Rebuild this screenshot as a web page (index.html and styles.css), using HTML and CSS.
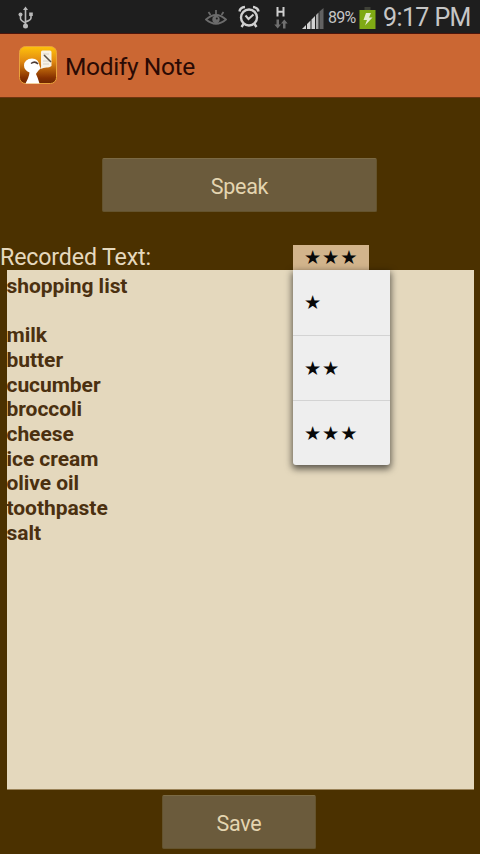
FILE: index.html
```html
<!DOCTYPE html>
<html lang="en">
<head>
<meta charset="utf-8">
<title>Modify Note</title>
<link rel="stylesheet" href="styles.css">
</head>
<body>
<div class="screen">
  <div class="status">
    <svg class="usb" width="16" height="24" viewBox="0 0 16 24" fill="none" stroke="#b9b9b9" stroke-width="1.6">
      <path d="M7.500 3v17M2.500 9v3.500q0 2 5 4.500M13 8v4q0 2-5.500 4"/>
      <path d="M7.500 0.500l2.500 3.500H5z" fill="#b9b9b9" stroke="none"/>
      <circle cx="7.500" cy="20" r="2.500" fill="#b9b9b9" stroke="none"/>
      <circle cx="2.500" cy="8.500" r="2" fill="#b9b9b9" stroke="none"/>
      <path d="M11.200 6.500h3.600v3.600h-3.600z" fill="#b9b9b9" stroke="none"/>
    </svg>
    <span class="fill"></span>
    <svg class="eye" width="22" height="18" viewBox="0 0 22 18" fill="none" stroke="#6c6c6c" stroke-width="1.700">
      <path d="M1 10.500Q11 1.500 21 10.500Q11 19 1 10.500zM11 5V1M5.500 6L3.500 3M16.500 6l2-3"/>
      <circle cx="11" cy="10.500" r="3.700" fill="#6c6c6c" stroke="none"/>
      <circle cx="11.800" cy="9.500" r="1" fill="#1e1e1e" stroke="none"/>
    </svg>
    <svg class="alarm" width="22" height="24" viewBox="0 0 22 24" fill="none" stroke="#d0d0d0" stroke-width="2.400">
      <circle cx="11" cy="12.500" r="8"/>
      <path d="M7.500 10.500l3 3.500 5-4.500" stroke-width="2"/>
      <path d="M1.500 6.500Q2 2.500 7 2M20.500 6.500Q20 2.500 15 2M5.500 19l-2 3M16.500 19l2 3"/>
    </svg>
    <svg class="data" width="14" height="23" viewBox="0 0 14 23">
      <path d="M3.500 0v9.500M9.500 0v9.500M3.500 4.700h6" fill="none" stroke="#d0d0d0" stroke-width="2"/>
      <path d="M2.500 12.500h2.500v5h2L3.700 21.500.3 17.500h2.200zM9 21.500h2.500v-5h2.200L10.300 12.500 7 16.500h2z" fill="#6f6f6f"/>
    </svg>
    <svg class="signal" width="22" height="22" viewBox="0 0 22 22">
      <path d="M0 21l4-4v4zM5 16l3.500-3.500V21H5zM9.500 11.500L13 8v13H9.500z" fill="#d2d2d2"/>
      <path d="M14 7l2.500-2.500V21H14z" fill="#a8a8a8"/>
      <path d="M17.500 3.500L21.500 0v21h-4z" fill="#626262"/>
    </svg>
    <span class="percent">89%</span>
    <svg class="battery" width="17" height="23" viewBox="0 0 17 23">
      <path d="M5.500 0h6v3h-6z" fill="#3f4138"/>
      <path d="M0.500 3h16v19h-16z" fill="#7faa14"/>
      <path d="M7 6h5l-2 4.500h3.500L6 18.500l2-5.500H4.500z" fill="#e6edcf"/>
    </svg>
    <span class="clock">9:17 PM</span>
  </div>
  <header class="bar">
    <svg width="38" height="38" viewBox="0 0 38 38">
      <defs>
        <linearGradient id="g" x1="0" y1="0" x2="0" y2="1">
          <stop offset="0" stop-color="#ffc20a"/><stop offset=".4" stop-color="#e28a12"/><stop offset=".85" stop-color="#853000"/><stop offset="1" stop-color="#6d2600"/>
        </linearGradient>
      </defs>
      <rect x=".5" y=".5" width="37" height="37" rx="6" fill="url(#g)" stroke="#e9a23b"/>
      <path d="M22 6q0-1.500 1.500-1.500H31q1.500 0 1.500 1.500v14q-3 2-5 1.500-3 0-6 1.500 1-3 .5-5z" fill="#f7f2e6"/>
      <path d="M24 8h6M24 15h6M24 18h6" stroke="#d0c8b6" stroke-width=".8"/>
      <path d="M25 9l7 7" stroke="#5b5146" stroke-width="1.600"/>
      <path d="M6.500 37.500Q10 31 10.500 26.500Q5 24 5 19.500Q5.500 13 13 12.600Q19.500 12.800 20.500 19.500L21.500 22.500 19.500 24.500Q17.500 27 17 28Q19 32 20.500 37.500z" fill="#fff"/>
      <path d="M12 17.500q4-3 7 .5" fill="none" stroke="#4b3a34" stroke-width="1.500"/>
    </svg>
    <h1>Modify Note</h1>
  </header>
  <main>
    <button class="btn speak">Speak</button>
    <div class="label-row">
      <span class="label">Recorded Text:</span>
      <div class="rating">
        <span class="stars">★★★</span>
        <ul class="menu">
          <li>★</li>
          <li>★★</li>
          <li>★★★</li>
        </ul>
      </div>
    </div>
    <div class="note">shopping list

milk
butter
cucumber
broccoli
cheese
ice cream
olive oil
toothpaste
salt</div>
    <button class="btn save">Save</button>
  </main>
</div>
</body>
</html>
```
FILE: styles.css
```css
* { box-sizing: border-box; }
body {
  margin: 0;
  background: #4b3100;
  font-family: Roboto, "Liberation Sans", sans-serif;
}
.screen {
  width: 480px;
  height: 854px;
  overflow: hidden;
  display: flex;
  flex-direction: column;
}
.status {
  height: 33px;
  flex: none;
  display: flex;
  align-items: flex-start;
  padding: 0 10px 0 18px;
  background: #1e1e1e;
  color: #c6c6c6;
  white-space: nowrap;
}
.status svg { flex: none; }
.fill { flex: 1; }
.usb { margin-top: 6px; }
.eye { margin: 9px 11px 0 0; }
.alarm { margin: 5px 14px 0 0; }
.data { margin: 7px 14px 0 0; }
.signal { margin: 8px 4px 0 0; }
.percent {
  width: 30px;
  font-size: 16px;
  line-height: 36px;
  letter-spacing: -0.7px;
}
.battery { margin: 7px 7px 0 1px; }
.clock {
  width: 87px;
  font-size: 25px;
  line-height: 36px;
  letter-spacing: -0.6px;
}
.bar {
  height: 65px;
  flex: none;
  display: flex;
  align-items: center;
  gap: 8px;
  padding: 0 0 1px 19px;
  background: #cb6733;
  border-top: 1px solid #4d150b;
  border-bottom: 1px solid #6d3510;
}
h1 {
  margin: 0;
  padding-top: 3px;
  font-size: 24.500px;
  font-weight: 400;
  letter-spacing: -0.35px;
  color: #2a0a04;
}
main {
  flex: 1;
  display: flex;
  flex-direction: column;
  padding-top: 60px;
}
.btn {
  height: 54px;
  flex: none;
  padding: 3px 0 0;
  border: 1px solid #64532d;
  border-top-color: #7b6a44;
  border-radius: 2px;
  background: #6b5b3c;
  color: #e4d5b0;
  font: 21.500px Roboto, "Liberation Sans", sans-serif;
  letter-spacing: -0.3px;
}
.speak { width: 275px; margin-left: 102px; }
.save { width: 154px; margin: 5px 0 0 162px; padding-top: 2px; }
.label-row {
  height: 25px;
  flex: none;
  display: flex;
  margin-top: 33px;
}
.label {
  width: 293px;
  font-size: 23.200px;
  line-height: 24px;
  letter-spacing: -0.15px;
  color: #e5d8bd;
}
.rating {
  position: relative;
  width: 76px;
  height: 25px;
  padding-left: 11px;
  background: #d2b48c;
}
.stars, .menu {
  font-family: "DejaVu Sans", sans-serif;
  font-size: 19.300px;
  letter-spacing: 0.8px;
  color: #080808;
}
.stars { display: block; line-height: 26px; }
.menu {
  position: absolute;
  top: 25px;
  left: 0;
  z-index: 1;
  width: 97px;
  margin: 0;
  padding: 0;
  list-style: none;
  background: #eee;
  border-radius: 0 0 3px 3px;
  box-shadow: 0 3px 7px 1px rgba(0, 0, 0, .6);
}
.menu li {
  height: 65px;
  padding-left: 11px;
  line-height: 65px;
}
.menu li + li { border-top: 1px solid #d3d3d3; }
.note {
  flex: none;
  width: 467px;
  height: 520px;
  margin-left: 6.500px;
  padding-top: 4px;
  background: #e4d8bd;
  border-bottom: 1px solid #9a8257;
  color: #4b3010;
  font-size: 21px;
  font-weight: 700;
  line-height: 24.670px;
  letter-spacing: -0.05px;
  white-space: pre-line;
}
```
